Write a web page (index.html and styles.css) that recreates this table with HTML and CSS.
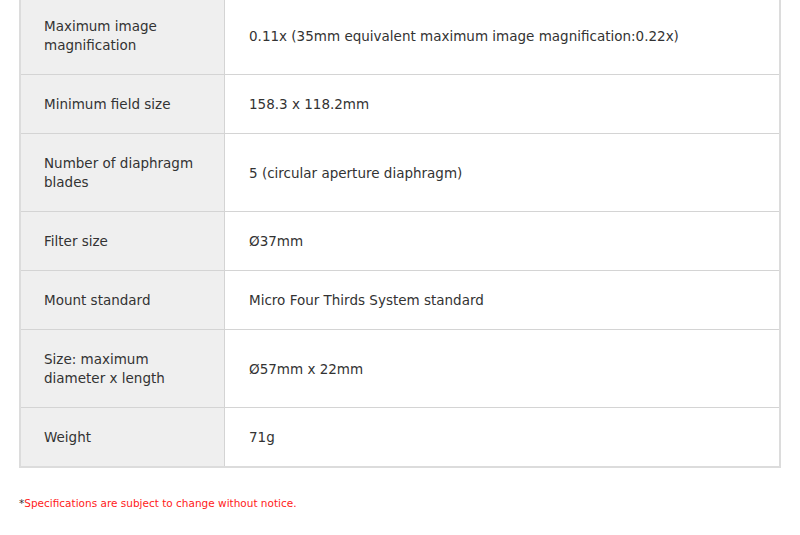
FILE: index.html
```html
<!DOCTYPE html>
<html>
<head>
<meta charset="utf-8">
<link rel="stylesheet" href="styles.css">
</head>
<body>
<div class="page">
  <table class="spec">
    <tr><th>Maximum image magnification</th><td>0.11x (35mm equivalent maximum image magnification:0.22x)</td></tr>
    <tr><th>Minimum field size</th><td>158.3 x 118.2mm</td></tr>
    <tr><th>Number of diaphragm blades</th><td>5 (circular aperture diaphragm)</td></tr>
    <tr><th>Filter size</th><td>Ø37mm</td></tr>
    <tr><th>Mount standard</th><td>Micro Four Thirds System standard</td></tr>
    <tr><th>Size: maximum diameter x length</th><td>Ø57mm x 22mm</td></tr>
    <tr><th>Weight</th><td>71g</td></tr>
  </table>
  <p class="note"><span class="ast">*</span>Specifications are subject to change without notice.</p>
</div>
</body>
</html>
```
FILE: styles.css
```css
html, body {
  margin: 0;
  padding: 0;
  background: #fff;
}
.page {
  padding: 0 19px 0 19px;
  margin-top: -5px;
  font-family: "DejaVu Sans", Verdana, sans-serif;
  color: #333;
}
.spec {
  width: 762px;
  border-collapse: collapse;
  border: 2px solid #dcdcdc;
  font-size: 13.5px;
  line-height: 19px;
}
.spec th, .spec td {
  border: 1px solid #d4d4d4;
  padding: 20px 24px 19px 24px;
  text-align: left;
  vertical-align: middle;
  font-weight: normal;
}
.spec th {
  width: 157px;
  padding-left: 23px;
  padding-right: 23px;
  background: #efefef;
}
.spec td {
  background: #fff;
}
.note {
  margin: 28px 0 0 0;
  font-size: 10.5px;
  color: #ff1a1a;
  line-height: 14px;
}
.ast {
  color: #333;
}
```
